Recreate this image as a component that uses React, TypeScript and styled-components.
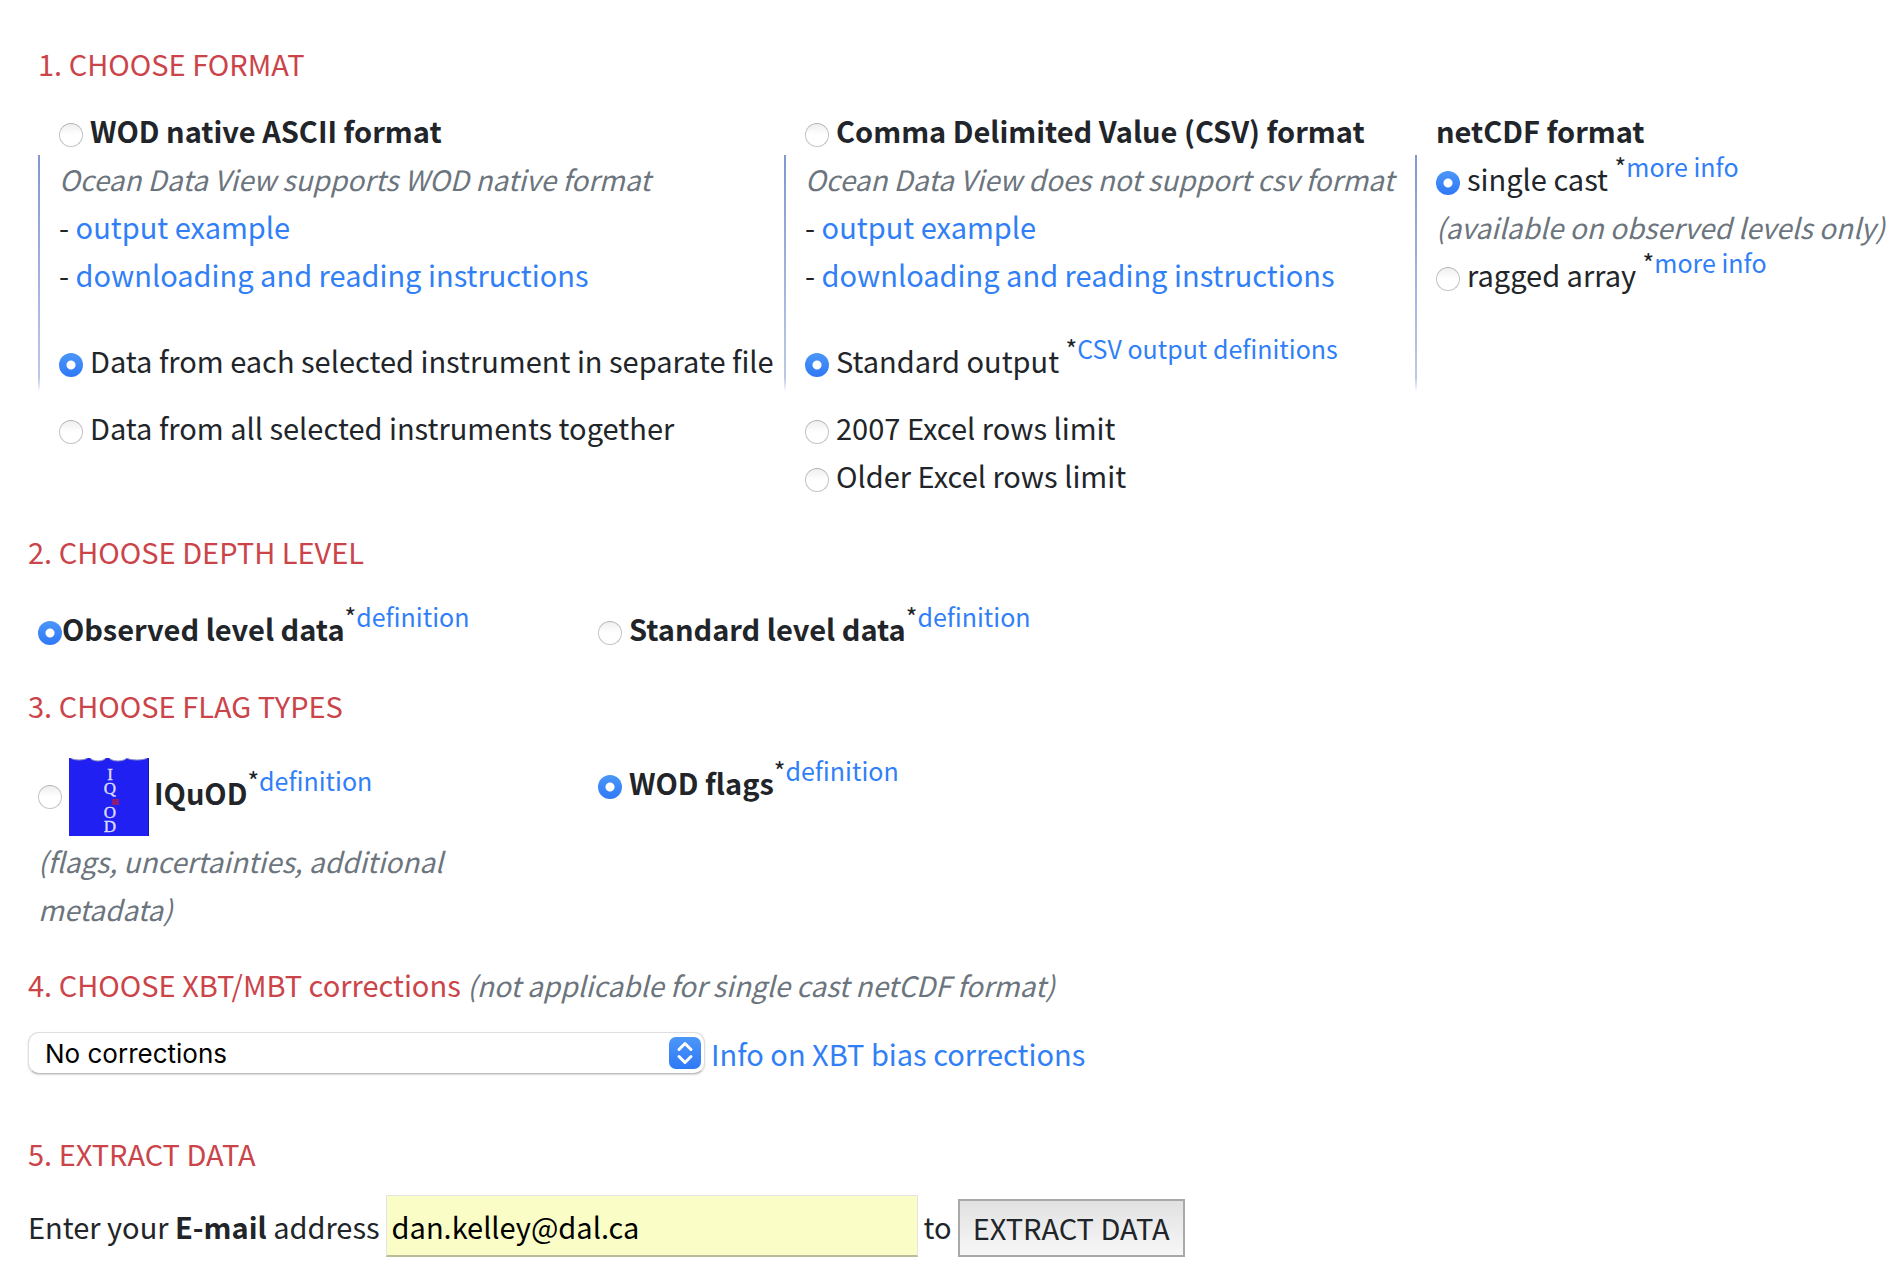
import React from "react";
import styled, { createGlobalStyle } from "styled-components";

const GlobalStyle = createGlobalStyle`
  * { box-sizing: border-box; }
  body {
    margin: 0;
    background: #ffffff;
    color: #212529;
    font-family: "Noto Sans CJK SC", "Noto Sans", sans-serif;
    font-size: 29px;
    line-height: 48px;
  }
`;

const Form = styled.form`
  padding: 39px 0 4px 28px;
`;

const Section = styled.section<{ $before?: number }>`
  margin-top: ${(p) => p.$before ?? 0}px;
`;

const Heading = styled.h2<{ $indent?: boolean }>`
  margin: 0;
  padding-left: ${(p) => (p.$indent ? 10 : 0)}px;
  color: #cb444a;
  font-size: inherit;
  font-weight: 400;
`;

const Note = styled.span`
  color: #6c757d;
  font-size: 28px;
  font-style: italic;
  font-weight: 400;
  line-height: 0;
`;

const FormatGrid = styled.div`
  display: grid;
  grid-template-columns: 746fr 631fr 483fr;
  margin: 19px 0 0 10px;
  white-space: nowrap;
`;

const ColumnTitle = styled.div`
  padding-left: 21px;
  font-weight: 700;
`;

const ColumnBody = styled.div`
  min-height: 237px;
  padding-left: 21px;
  background: linear-gradient(#8197d0, #bcc8e6 94%, #ffffff) no-repeat left 1px / 2px 237px;
`;

const Line = styled.div<{ $gap?: number }>`
  margin-top: ${(p) => p.$gap ?? 0}px;
`;

const Radio = styled.input.attrs({ type: "radio" })<{ $tight?: boolean }>`
  appearance: none;
  width: 24px;
  height: 24px;
  margin: 0 ${(p) => (p.$tight ? 0 : 7)}px 0 0;
  border: 1px solid #c4c4c4;
  border-top-color: #b4b4b4;
  border-radius: 50%;
  background: linear-gradient(#efefef, #ffffff 50%);
  vertical-align: -4px;

  &:checked {
    border: 0;
    background:
      radial-gradient(circle, #ffffff 4px, transparent 5px),
      linear-gradient(#4b97f8, #2f78f6);
  }
`;

const Link = styled.a`
  color: #317ff7;
  text-decoration: none;
`;

const SupText = styled.sup`
  position: relative;
  top: -14px;
  font-size: 25px;
  font-weight: 400;
  line-height: 0;
  vertical-align: baseline;
`;

const OptionGrid = styled.div`
  display: grid;
  grid-template-columns: 560px 1fr;
  align-items: start;
  margin-top: 29px;
  padding-left: 10px;
`;

const Option = styled.div`
  max-width: 480px;
  font-weight: 700;
`;

const Logo = styled.svg`
  width: 80px;
  height: 78px;
  margin-right: 5px;
  vertical-align: middle;
`;

const LogoLetter = styled.text`
  fill: #dcdcff;
  stroke: #dcdcff;
  stroke-width: 0.4px;
  font-family: "Liberation Serif", serif;
  font-size: 17px;
  font-weight: 400;
  text-anchor: middle;
`;

const Controls = styled.div<{ $before: number }>`
  display: flex;
  align-items: center;
  gap: 6px;
  margin-top: ${(p) => p.$before}px;
`;

const SelectBox = styled.div`
  display: grid;
  align-items: center;
  width: 677px;
`;

const Select = styled.select`
  grid-area: 1 / 1;
  appearance: none;
  width: 100%;
  height: 42px;
  padding: 0 48px 0 16px;
  border: 1px solid #dedede;
  border-bottom-color: #bdbdbd;
  border-radius: 11px;
  background: #ffffff;
  box-shadow: 0 1px 2px rgba(0, 0, 0, 0.16);
  color: #000000;
  font-family: Inter, sans-serif;
  font-size: 26px;
`;

const Stepper = styled.svg`
  grid-area: 1 / 1;
  justify-self: end;
  width: 32px;
  height: 32px;
  margin-right: 4px;
  pointer-events: none;
`;

const EmailInput = styled.input`
  width: 532px;
  height: 62px;
  padding: 0 5px;
  border: 1px solid #e4e4e4;
  border-bottom: 2px solid #b9bc98;
  background: #fafdc5;
  color: #000000;
  font: inherit;
`;

const SubmitButton = styled.button`
  align-self: flex-end;
  height: 58px;
  padding: 0 13px 3px;
  border: 2px solid #a9a9a9;
  background: linear-gradient(#e1e1e1, #f7f7f7);
  color: #212529;
  font: inherit;
  line-height: 48px;
`;

function Sup({ children }: { children: string }) {
  return (
    <SupText>
      *<Link href="#">{children}</Link>
    </SupText>
  );
}

interface ChoiceProps {
  id: string;
  group: string;
  label: React.ReactNode;
  checked?: boolean;
  tight?: boolean;
}

function Choice({ id, group, label, checked, tight }: ChoiceProps) {
  return (
    <>
      <Radio id={id} name={group} defaultChecked={checked} $tight={tight} />
      <label htmlFor={id}>{label}</label>
    </>
  );
}

function FormatLinks() {
  return (
    <>
      <Line>- <Link href="#">output example</Link></Line>
      <Line>- <Link href="#">downloading and reading instructions</Link></Line>
    </>
  );
}

function IquodLogo() {
  return (
    <Logo viewBox="0 0 80 78" role="img" aria-label="IQuOD logo">
      <rect width="80" height="78" fill="#2020f2" />
      <rect x="79" width="1" height="78" fill="#1616a8" />
      <g fill="#ffffff" stroke="#8a8ac8" strokeWidth="1">
        <ellipse cx="10" cy="-1" rx="9" ry="3" />
        <ellipse cx="29" cy="-1" rx="8" ry="4" />
        <ellipse cx="49" cy="-1" rx="9" ry="4" />
        <ellipse cx="68" cy="-1" rx="11" ry="3" />
      </g>
      <LogoLetter x="41" y="22">I</LogoLetter>
      <LogoLetter x="41" y="36">Q</LogoLetter>
      <rect x="43" y="41" width="7" height="6" fill="#8c1c78" />
      <LogoLetter x="41" y="60">O</LogoLetter>
      <LogoLetter x="41" y="74">D</LogoLetter>
    </Logo>
  );
}

export default function App() {
  return (
    <>
      <GlobalStyle />
      <Form onSubmit={(e) => e.preventDefault()}>
        <Section>
          <Heading $indent>1. CHOOSE FORMAT</Heading>
          <FormatGrid>
            <div>
              <ColumnTitle>
                <Choice id="ascii" group="format" label="WOD native ASCII format" />
              </ColumnTitle>
              <ColumnBody>
                <Line><Note>Ocean Data View supports WOD native format</Note></Line>
                <FormatLinks />
                <Line $gap={38}>
                  <Choice id="separate" group="files" label="Data from each selected instrument in separate file" checked />
                </Line>
                <Line $gap={19}>
                  <Choice id="together" group="files" label="Data from all selected instruments together" />
                </Line>
              </ColumnBody>
            </div>
            <div>
              <ColumnTitle>
                <Choice id="csv" group="format" label="Comma Delimited Value (CSV) format" />
              </ColumnTitle>
              <ColumnBody>
                <Line><Note>Ocean Data View does not support csv format</Note></Line>
                <FormatLinks />
                <Line $gap={38}>
                  <Choice id="standard-output" group="rows" label="Standard output" checked />{" "}
                  <Sup>CSV output definitions</Sup>
                </Line>
                <Line $gap={19}>
                  <Choice id="excel-2007" group="rows" label="2007 Excel rows limit" />
                </Line>
                <Line>
                  <Choice id="excel-older" group="rows" label="Older Excel rows limit" />
                </Line>
              </ColumnBody>
            </div>
            <div>
              <ColumnTitle>netCDF format</ColumnTitle>
              <ColumnBody>
                <Line>
                  <Choice id="single-cast" group="format" label="single cast" checked />{" "}
                  <Sup>more info</Sup>
                </Line>
                <Line><Note>(available on observed levels only)</Note></Line>
                <Line>
                  <Choice id="ragged-array" group="format" label="ragged array" />{" "}
                  <Sup>more info</Sup>
                </Line>
              </ColumnBody>
            </div>
          </FormatGrid>
        </Section>

        <Section $before={28}>
          <Heading>2. CHOOSE DEPTH LEVEL</Heading>
          <OptionGrid>
            <Option>
              <Choice id="observed" group="depth" label="Observed level data" checked tight />
              <Sup>definition</Sup>
            </Option>
            <Option>
              <Choice id="standard" group="depth" label="Standard level data" />
              <Sup>definition</Sup>
            </Option>
          </OptionGrid>
        </Section>

        <Section $before={29}>
          <Heading>3. CHOOSE FLAG TYPES</Heading>
          <OptionGrid>
            <Option>
              <div>
                <Radio id="iquod" name="flags" />
                <IquodLogo />
                <label htmlFor="iquod">IQuOD</label>
                <Sup>definition</Sup>
              </div>
              <Note>(flags, uncertainties, additional metadata)</Note>
            </Option>
            <Option>
              <Choice id="wod-flags" group="flags" label="WOD flags" checked />
              <Sup>definition</Sup>
            </Option>
          </OptionGrid>
        </Section>

        <Section $before={28}>
          <Heading>
            4. CHOOSE XBT/MBT corrections <Note>(not applicable for single cast netCDF format)</Note>
          </Heading>
          <Controls $before={21}>
            <SelectBox>
              <Select aria-label="XBT/MBT corrections" defaultValue="none">
                <option value="none">No corrections</option>
              </Select>
              <Stepper viewBox="0 0 32 32" aria-hidden="true">
                <defs>
                  <linearGradient id="stepper-fill" x1="0" y1="0" x2="0" y2="1">
                    <stop offset="0" stopColor="#4b97f8" />
                    <stop offset="1" stopColor="#2f78f6" />
                  </linearGradient>
                </defs>
                <rect width="32" height="32" rx="7" fill="url(#stepper-fill)" />
                <path
                  d="M10 12.5 L16 6.5 L22 12.5 M10 19.5 L16 25.5 L22 19.5"
                  fill="none"
                  stroke="#ffffff"
                  strokeWidth="3"
                  strokeLinecap="round"
                  strokeLinejoin="round"
                />
              </Stepper>
            </SelectBox>
            <Link href="#">Info on XBT bias corrections</Link>
          </Controls>
        </Section>

        <Section $before={52}>
          <Heading>5. EXTRACT DATA</Heading>
          <Controls $before={18}>
            <label htmlFor="email">Enter your <b>E-mail</b> address</label>
            <EmailInput id="email" type="email" defaultValue="dan.kelley@dal.ca" />
            <span>to</span>
            <SubmitButton type="submit">EXTRACT DATA</SubmitButton>
          </Controls>
        </Section>
      </Form>
    </>
  );
}
